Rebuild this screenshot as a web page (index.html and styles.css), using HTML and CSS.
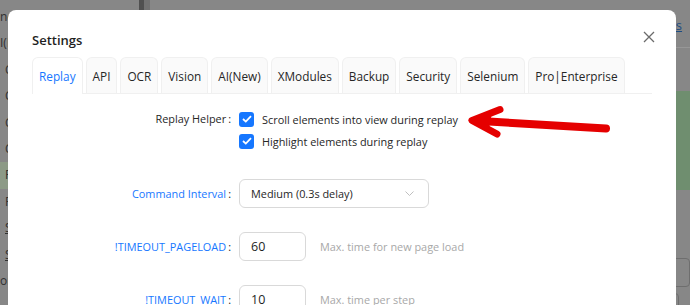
FILE: index.html
```html
<!DOCTYPE html>
<html lang="en">
<head>
    <meta charset="UTF-8">
    <title>Settings</title>
    <link rel="stylesheet" href="styles.css">
</head>
<body>
    <div class="page">
        <div class="sidebar">
            <div class="side-item edge">nc</div>
            <div class="side-item edge">I(I</div>
            <div class="side-item">C</div>
            <div class="side-item">C</div>
            <div class="side-item">C</div>
            <div class="side-item">C</div>
            <div class="side-item current">F</div>
            <div class="side-item">F</div>
            <div class="side-item"><u>S</u></div>
            <div class="side-item"><u>S</u></div>
            <div class="side-item edge">or</div>
        </div>
        <div class="splitter"></div>
        <div class="main">
            <div class="main-header"><a class="link">er rules</a></div>
            <div class="toolbar"></div>
            <div class="row green"><span class="knob"><i></i></span></div>
            <div class="row green"><span class="knob"><i></i></span></div>
            <div class="row green"><span class="knob"><i></i></span></div>
            <div class="row"><span class="knob"><i></i></span></div>
            <div class="row"><span class="knob"><i></i></span></div>
            <div class="row"><span class="box"></span></div>
            <div class="row"><span class="box box-low"></span></div>
        </div>
    </div>

    <div class="modal">
        <div class="modal-title">Settings</div>
        <button class="modal-close">
            <svg width="12" height="12" viewBox="0 0 12 12"><path d="M1 1L11 11M11 1L1 11" stroke="#6b6b6b" stroke-width="1.3"/></svg>
        </button>

        <div class="tabs">
            <div class="tab active">Replay</div>
            <div class="tab">API</div>
            <div class="tab">OCR</div>
            <div class="tab">Vision</div>
            <div class="tab">AI(New)</div>
            <div class="tab">XModules</div>
            <div class="tab">Backup</div>
            <div class="tab">Security</div>
            <div class="tab">Selenium</div>
            <div class="tab">Pro|Enterprise</div>
        </div>

        <div class="form">
            <div class="form-item checks">
                <div class="form-label">Replay Helper</div>
                <div class="form-control">
                    <label class="check">
                        <span class="check-box"><svg width="10" height="8" viewBox="0 0 10 8"><path d="M1 4L3.8 6.6L9 1.2" fill="none" stroke="#fff" stroke-width="1.8"/></svg></span>
                        Scroll elements into view during replay
                    </label>
                    <label class="check">
                        <span class="check-box"><svg width="10" height="8" viewBox="0 0 10 8"><path d="M1 4L3.8 6.6L9 1.2" fill="none" stroke="#fff" stroke-width="1.8"/></svg></span>
                        Highlight elements during replay
                    </label>
                </div>
            </div>

            <div class="form-item">
                <div class="form-label"><span class="label-link">Command Interval</span></div>
                <div class="form-control">
                    <div class="select">
                        <span>Medium (0.3s delay)</span>
                        <svg width="9" height="5" viewBox="0 0 9 5"><path d="M0.5 0.5L4.5 4.5L8.5 0.5" fill="none" stroke="#bfbfbf"/></svg>
                    </div>
                </div>
            </div>

            <div class="form-item">
                <div class="form-label"><span class="label-link">!TIMEOUT_PAGELOAD</span></div>
                <div class="form-control number-row">
                    <div class="number">60</div>
                    <span class="hint">Max. time for new page load</span>
                </div>
            </div>

            <div class="form-item">
                <div class="form-label"><span class="label-link">!TIMEOUT_WAIT</span></div>
                <div class="form-control number-row">
                    <div class="number">10</div>
                    <span class="hint">Max. time per step</span>
                </div>
            </div>
        </div>
    </div>

    <svg class="arrow" width="690" height="305" viewBox="0 0 690 305">
        <g fill="none" stroke="#e50000" stroke-linecap="round" stroke-linejoin="round">
            <path d="M480 121L606 128.5" stroke-width="8"/>
            <path d="M500 109.5L472 120.5L497 134" stroke-width="7"/>
        </g>
        <path d="M468 120.5L492 112L489 129Z" fill="#e50000"/>
    </svg>
</body>
</html>
```

FILE: styles.css
```css
body {
    margin: 0;
    width: 690px;
    height: 305px;
    overflow: hidden;
    position: relative;
    background-color: #878787;
    font-family: "Open Sans", "Noto Sans", sans-serif;
    color: #262626;
}

/* page behind the dialog */
.page {
    display: flex;
    height: 305px;
}
.sidebar {
    width: 177px;
    padding-top: 4px;
    box-sizing: border-box;
}
.side-item {
    height: 26.4px;
    line-height: 26.4px;
    padding-left: 5px;
    font-size: 12px;
    color: #303030;
    white-space: nowrap;
    overflow: hidden;
}
.side-item.edge {
    padding-left: 0;
}
.side-item.current {
    background-color: #8c9a86;
}
.splitter {
    width: 7px;
    background-color: #505050;
    border-right: 6px solid #727272;
}
.main {
    flex: 1;
}
.main-header {
    height: 48px;
    box-sizing: border-box;
    padding: 13px 0 0 486px;
    border-bottom: 1px solid #979797;
    white-space: nowrap;
}
.link {
    color: #1c4c82;
    text-decoration: underline;
    font-size: 13px;
}
.toolbar {
    height: 43px;
}
.row {
    height: 33px;
    display: flex;
    align-items: center;
}
.row.green {
    background-color: #6f8e6f;
}
.knob {
    margin-left: 472px;
    width: 20px;
    height: 20px;
    box-sizing: border-box;
    border-radius: 50%;
    border: 1px solid #6a6a6a;
    background-color: #8e8e8e;
    display: flex;
    align-items: center;
    justify-content: center;
}
.knob i {
    width: 10px;
    height: 2px;
    background-color: #333;
}
.box {
    margin-left: 498px;
    width: 40px;
    height: 27px;
    border: 1px solid #6e6e6e;
    border-radius: 4px;
}
.box.box-low {
    margin-left: 487px;
    align-self: flex-end;
}

/* dialog */
.modal {
    position: absolute;
    left: 8px;
    top: 10px;
    width: 668px;
    height: 320px;
    box-sizing: border-box;
    padding: 20px 24px 0;
    background-color: white;
    border-radius: 8px;
}
.modal-title {
    font-size: 13px;
    font-weight: 600;
    line-height: 20px;
    color: #1f1f1f;
    margin-bottom: 7px;
}
.modal-close {
    position: absolute;
    top: 21px;
    right: 21px;
    width: 12px;
    height: 12px;
    padding: 0;
    border: none;
    background: none;
}
.modal-close svg {
    display: block;
}

.tabs {
    display: flex;
    align-items: flex-end;
    gap: 3px;
    height: 36px;
    border-bottom: 1px solid #f0f0f0;
}
.tab {
    height: 36px;
    box-sizing: border-box;
    padding: 0 6px;
    display: flex;
    align-items: center;
    border: 1px solid #f0f0f0;
    border-bottom: none;
    border-radius: 6px 6px 0 0;
    background-color: #fafafa;
    font-size: 11.8px;
    color: #262626;
}
.tab.active {
    height: 37px;
    margin-bottom: -1px;
    background-color: white;
    color: #1677ff;
}

.form {
    padding-top: 14px;
    font-size: 10.9px;
}
.form-item {
    display: grid;
    grid-template-columns: 207px 1fr;
    margin-bottom: 24px;
}
.form-item.checks {
    margin-bottom: 27px;
}
.form-label {
    text-align: right;
    line-height: 29px;
    white-space: nowrap;
}
.checks .form-label {
    line-height: 22px;
}
.form-label::after {
    content: ":";
    margin: 0 8px 0 2px;
    color: #262626;
}
.label-link {
    color: #1677ff;
}
.check {
    display: flex;
    align-items: center;
    height: 22px;
}
.check-box {
    width: 15px;
    height: 15px;
    margin-right: 8px;
    border-radius: 3px;
    background-color: #1677ff;
    display: flex;
    align-items: center;
    justify-content: center;
}
.select {
    width: 190px;
    height: 29px;
    box-sizing: border-box;
    padding: 0 14px 0 11px;
    border: 1px solid #d9d9d9;
    border-radius: 6px;
    display: flex;
    align-items: center;
    justify-content: space-between;
}
.number-row {
    display: flex;
    align-items: center;
}
.number {
    width: 67px;
    height: 29px;
    box-sizing: border-box;
    padding-left: 11px;
    border: 1px solid #d9d9d9;
    border-radius: 6px;
    display: flex;
    align-items: center;
    font-size: 12.5px;
    color: #1f1f1f;
}
.hint {
    margin-left: 14px;
    color: #a8a8a8;
}

.arrow {
    position: absolute;
    left: 0;
    top: 0;
    pointer-events: none;
}
```
